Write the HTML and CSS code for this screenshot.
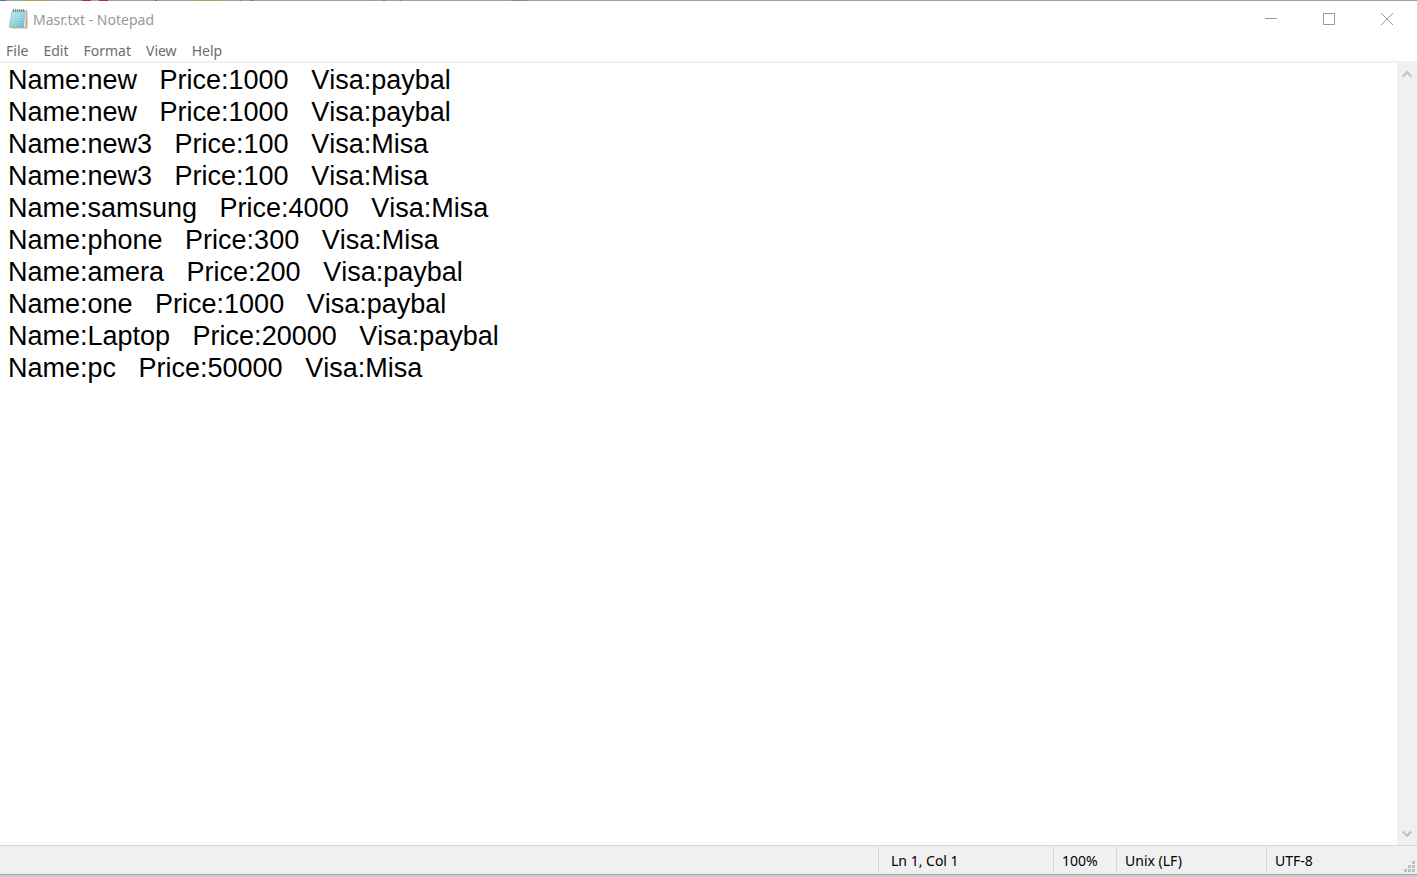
FILE: index.html
```html
<!DOCTYPE html>
<html lang="en">
<head>
<meta charset="utf-8">
<title>Masr.txt - Notepad</title>
<link rel="stylesheet" href="styles.css">
</head>
<body>
<div class="window">
  <div class="top-edge"></div>
  <header class="titlebar">
    <svg class="app-icon" width="20" height="22" viewBox="0 0 20 22" aria-hidden="true">
      <defs>
        <linearGradient id="page" x1="0" y1="0" x2="1" y2="1">
          <stop offset="0" stop-color="#c4e9f0"/>
          <stop offset=".5" stop-color="#98d5e2"/>
          <stop offset="1" stop-color="#55aec6"/>
        </linearGradient>
      </defs>
      <path d="M5 3h14.500v17.500H4z" fill="#c9b58e"/>
      <path d="M4.500 2.500h14L17.500 19.500H2z" fill="#f4f6f2" stroke="#8e9a9a" stroke-width=".6"/>
      <path d="M4 3h13.500L15.500 19H1z" fill="url(#page)" stroke="#8fb9c3" stroke-width=".5"/>
      <path d="M3.600 7h13M3.200 9.500h13M2.800 12h13M2.400 14.500h13M2 17h13" stroke="#bde4ec" stroke-width=".4"/>
      <path d="M5.500 1v3M7.500 1v3M9.500 1v3M11.500 1v3M13.500 1v3M15.500 1v3" stroke="#69787c" stroke-width=".8"/>
    </svg>
    <h1 class="title">Masr.txt - Notepad</h1>
    <div class="controls">
      <button class="control" type="button" aria-label="Minimize"><svg width="12" height="12" viewBox="0 0 12 12"><path d="M0 5.500h12"/></svg></button>
      <button class="control" type="button" aria-label="Maximize"><svg width="12" height="12" viewBox="0 0 12 12"><path d="M.5.5h11v11H.5z"/></svg></button>
      <button class="control" type="button" aria-label="Close"><svg width="12" height="12" viewBox="0 0 12 12"><path d="M0 0l12 12M12 0L0 12"/></svg></button>
    </div>
  </header>
  <nav class="menubar" aria-label="Menu">
    <button class="menu" type="button">File</button>
    <button class="menu" type="button">Edit</button>
    <button class="menu" type="button">Format</button>
    <button class="menu" type="button">View</button>
    <button class="menu" type="button">Help</button>
  </nav>
  <main class="workspace">
    <textarea class="editor" aria-label="Text editor" wrap="off" spellcheck="false">Name:new   Price:1000   Visa:paybal
Name:new   Price:1000   Visa:paybal
Name:new3   Price:100   Visa:Misa
Name:new3   Price:100   Visa:Misa
Name:samsung   Price:4000   Visa:Misa
Name:phone   Price:300   Visa:Misa
Name:amera   Price:200   Visa:paybal
Name:one   Price:1000   Visa:paybal
Name:Laptop   Price:20000   Visa:paybal
Name:pc   Price:50000   Visa:Misa</textarea>
    <div class="scrollbar">
      <button class="arrow" type="button" aria-label="Scroll up"><svg width="10" height="8" viewBox="0 0 10 8"><path d="M.7 6.500L5 2.200l4.300 4.300"/></svg></button>
      <button class="arrow" type="button" aria-label="Scroll down"><svg width="10" height="8" viewBox="0 0 10 8"><path d="M.7 1.500L5 5.800l4.300-4.300"/></svg></button>
    </div>
  </main>
  <footer class="statusbar">
    <span class="cell cell-position">Ln 1, Col 1</span>
    <span class="cell cell-zoom">100%</span>
    <span class="cell cell-ending">Unix (LF)</span>
    <span class="cell cell-encoding">UTF-8</span>
    <svg class="grip" width="11" height="11" viewBox="0 0 11 11" aria-hidden="true"><path d="M8 0h3v3H8zM4 4h3v3H4zM8 4h3v3H8zM0 8h3v3H0zM4 8h3v3H4zM8 8h3v3H8z"/></svg>
  </footer>
</div>
</body>
</html>
```
FILE: styles.css
```css
* {
  box-sizing: border-box;
}

body {
  margin: 0;
  font-family: "Noto Sans", "Open Sans", sans-serif;
  font-size: 14px;
  background: #fff;
}

button {
  margin: 0;
  padding: 0;
  border: 0;
  background: none;
  font: inherit;
  color: inherit;
}

.window {
  display: flex;
  flex-direction: column;
  height: 100vh;
  border-bottom: 2px solid #ccc;
}

.top-edge {
  height: 1px;
  background: linear-gradient(90deg,
    #4a78a8 0 6px, #a0a0a0 6px 24px, #b59b58 24px 53px,
    #a0a0a0 53px 82px, #b02a3a 82px 91px, #a0a0a0 91px 99px,
    #b02a3a 99px 108px, #a0a0a0 108px 155px, #666 155px 157px,
    #a0a0a0 157px 195px, #b59b58 195px 219px, #a0a0a0 219px 240px,
    #777 240px 241px, #a0a0a0 241px 250px, #808080 250px 254px,
    #a0a0a0 254px 373px, #777 373px 374px, #a0a0a0 374px 383px,
    #b55 383px 385px, #a0a0a0 385px 400px, #777 400px 401px,
    #a0a0a0 401px 511px, #888 511px 527px, #a0a0a0 527px);
}

.titlebar {
  display: flex;
  align-items: center;
  height: 36px;
  padding: 0 1px 0 8px;
  color: #999;
}

.title {
  margin: 0 0 0 5px;
  font-size: 14px;
  font-weight: 400;
}

.controls {
  display: flex;
  align-self: stretch;
  margin-left: auto;
}

.control {
  display: grid;
  place-items: center;
  width: 58px;
}

.control svg {
  fill: none;
  stroke: #999;
}

.menubar {
  display: flex;
  gap: 15px;
  height: 26px;
  padding: 2px 6px 0;
  border-bottom: 2px solid #f0f0f0;
  color: #6d6d6d;
}

.workspace {
  display: flex;
  flex: 1;
  min-height: 0;
}

.editor {
  flex: 1;
  min-width: 0;
  padding: 1px 8px;
  border: 0;
  outline: 0;
  resize: none;
  overflow: hidden;
  background: #fff;
  color: #000;
  font: 27px/32px "Liberation Sans", Arial, sans-serif;
  font-kerning: none;
}

.scrollbar {
  display: flex;
  flex-direction: column;
  justify-content: space-between;
  width: 20px;
  background: #f0f0f0;
}

.arrow {
  display: grid;
  place-items: center;
  height: 22px;
}

.arrow svg {
  fill: none;
  stroke: #bfbfbf;
  stroke-width: 2;
}

.statusbar {
  position: relative;
  display: flex;
  justify-content: flex-end;
  height: 30px;
  padding: 1px 0;
  border-top: 1px solid #d7d7d7;
  border-bottom: 1px solid #a6a6a6;
  background: #f0f0f0;
  color: #000;
}

.cell {
  padding-left: 8px;
  border-left: 1px solid #d7d7d7;
  line-height: 28px;
}

.cell-position {
  width: 175px;
  padding-left: 12px;
}

.cell-zoom {
  width: 63px;
}

.cell-ending {
  width: 150px;
}

.cell-encoding {
  width: 151px;
}

.grip {
  position: absolute;
  right: 2px;
  bottom: 2px;
  fill: #bfbfbf;
}
```
